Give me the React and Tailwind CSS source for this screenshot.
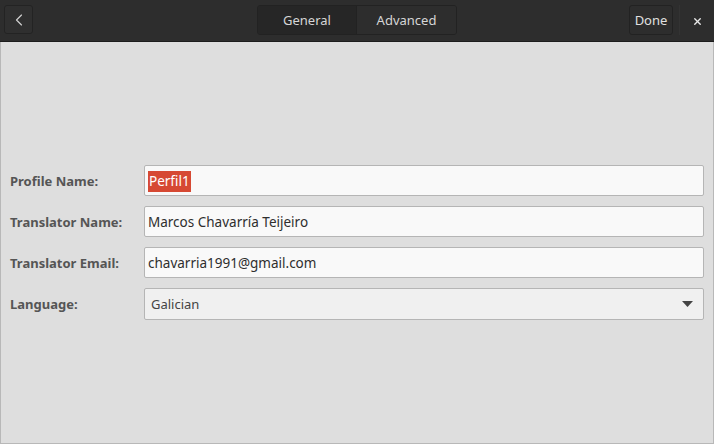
import { ChevronLeft, X } from 'lucide-react';

const rows = [
  { label: 'Profile Name:', value: 'Perfil1', selected: true },
  { label: 'Translator Name:', value: 'Marcos Chavarría Teijeiro' },
  { label: 'Translator Email:', value: 'chavarria1991@gmail.com' }
];

export default function App() {
  return (
    <div className="w-[714px] h-[444px] flex flex-col bg-[#dedede] font-['Noto_Sans',sans-serif] overflow-hidden">
      <header className="h-[42px] shrink-0 flex items-start bg-[#2d2d2d] border-b border-[#1c1c1c] px-[4px] pt-[5px]">
        <button className="w-[29px] h-[29px] flex items-center justify-center rounded-[3px] border border-[#232323] bg-[#2f2f2f] text-[#d0d0d0]">
          <ChevronLeft className="w-[20px] h-[20px]" strokeWidth={1.4} />
        </button>
        <div className="ml-[224px] flex h-[30px] rounded-[3px] border border-[#222] overflow-hidden text-[13px] text-[#d6d6d6]">
          <div className="w-[99px] flex items-center justify-center pt-[2px] bg-[#262626] border-r border-[#222]">General</div>
          <div className="w-[99px] flex items-center justify-center pt-[2px] bg-[#2d2d2d]">Advanced</div>
        </div>
        <button className="ml-[172px] w-[44px] h-[30px] flex items-center justify-center pt-[2px] rounded-[3px] border border-[#222] bg-[#2d2d2d] text-[13px] text-[#e0e0e0]">
          Done
        </button>
        <div className="ml-[6px] w-px h-[30px] bg-[#333]" />
        <div className="flex-1 h-[30px] flex items-center justify-center pl-[4px] pt-[2px] text-[#e8e8e8]">
          <X className="w-[11px] h-[11px]" strokeWidth={3} />
        </div>
      </header>

      <main className="flex-1 flex flex-col gap-[10px] pt-[123px] pl-[9px] pr-[9px] border-x border-[#b8b8b8] border-b">
        {rows.map((row) => (
          <div key={row.label} className="flex items-center">
            <span className="w-[134px] pt-[2px] text-[13px] font-bold text-[#555]">{row.label}</span>
            <div className="flex-1 h-[31px] flex items-center px-[3px] pt-[1px] bg-[#f9f9f9] border border-[#b5b5b5] rounded-[2px] text-[13.5px] text-[#2e2e2e]">
              {row.selected ? (
                <span className="bg-[#d64933] text-white px-[1px] leading-[21px]">{row.value}</span>
              ) : (
                row.value
              )}
            </div>
          </div>
        ))}
        <div className="flex items-center">
          <span className="w-[134px] pt-[2px] text-[13px] font-bold text-[#555]">Language:</span>
          <div className="flex-1 h-[32px] flex items-center justify-between pl-[6px] pr-[10px] pt-[1px] bg-[#f0f0f0] border border-[#b5b5b5] rounded-[2px] text-[13px] text-[#444]">
            <span>Galician</span>
            <svg width="11" height="7" viewBox="0 0 11 7">
              <path d="M0 0 H11 L5.5 6 Z" fill="#444" />
            </svg>
          </div>
        </div>
      </main>
    </div>
  );
}
